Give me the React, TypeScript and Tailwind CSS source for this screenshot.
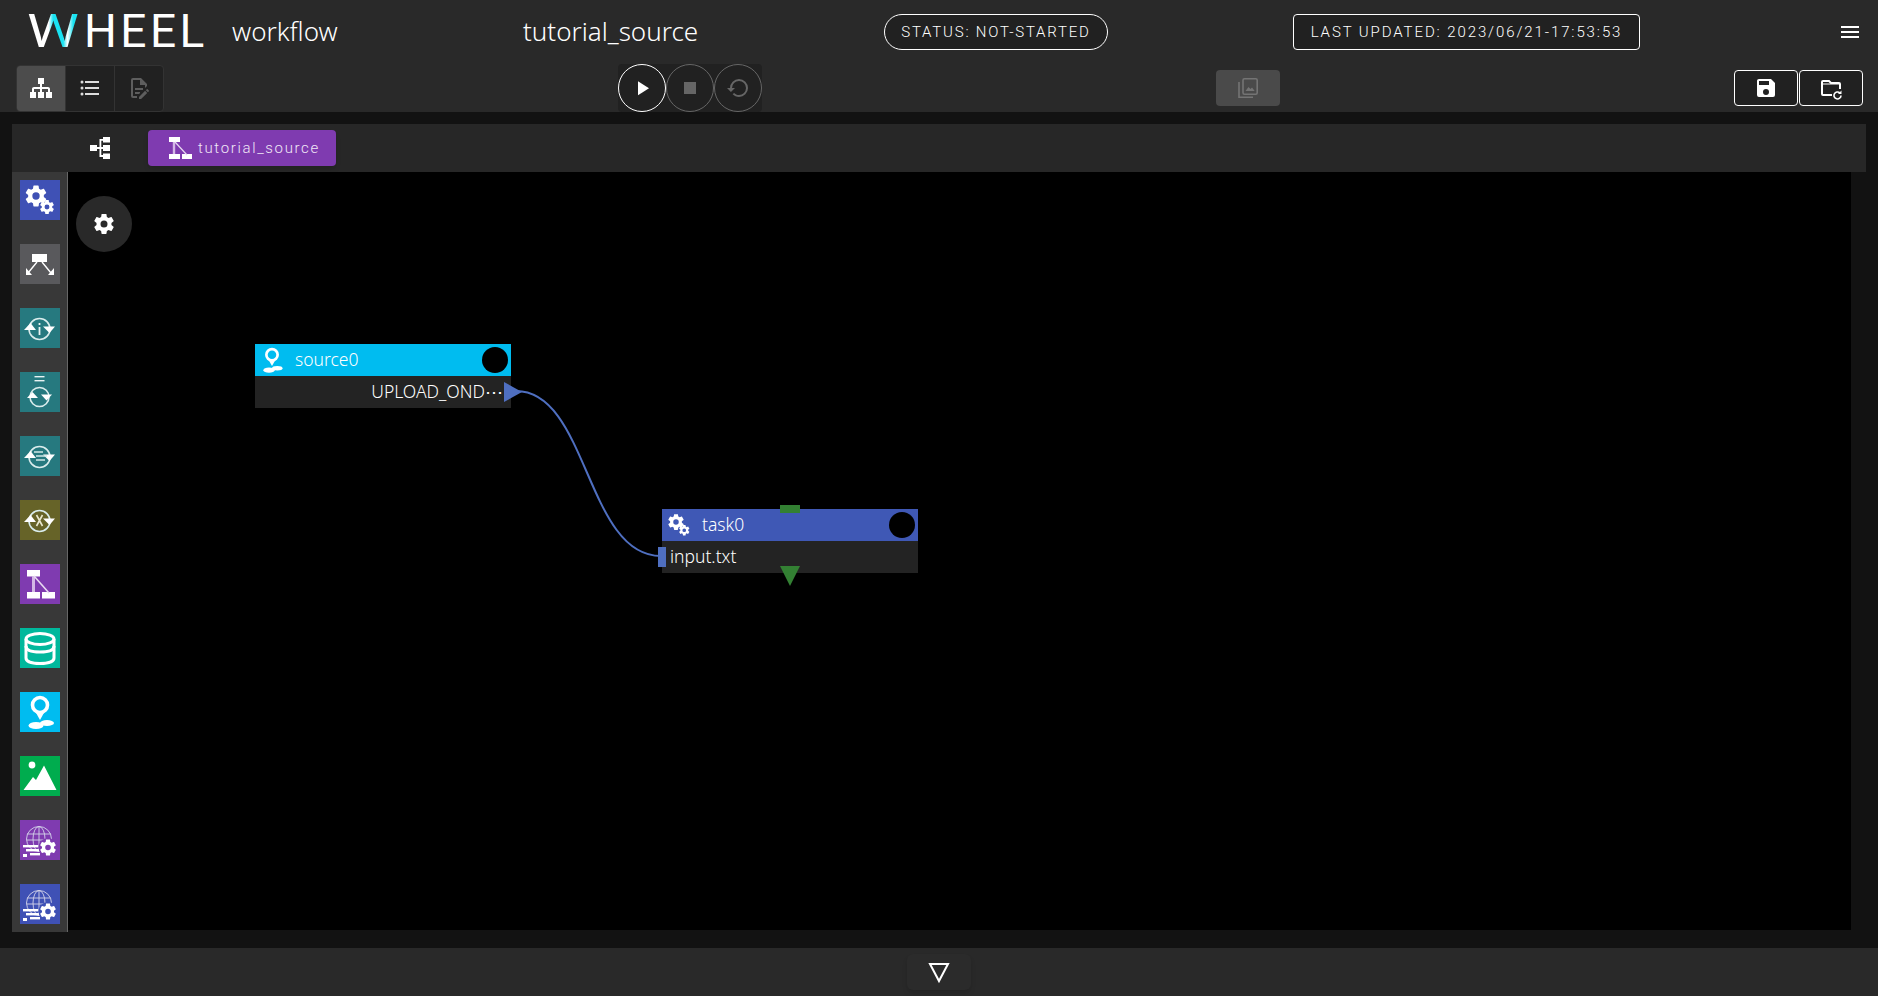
import type { ReactNode } from "react"

const COG =
  "M12,15.5A3.5,3.5 0 0,1 8.5,12A3.5,3.5 0 0,1 12,8.5A3.5,3.5 0 0,1 15.5,12A3.5,3.5 0 0,1 12,15.5M19.43,12.97C19.47,12.65 19.5,12.33 19.5,12C19.5,11.67 19.47,11.34 19.43,11L21.54,9.37C21.73,9.22 21.78,8.95 21.66,8.73L19.66,5.27C19.54,5.05 19.27,4.96 19.05,5.05L16.56,6.05C16.04,5.66 15.5,5.32 14.87,5.07L14.5,2.42C14.46,2.18 14.25,2 14,2H10C9.75,2 9.54,2.18 9.5,2.42L9.13,5.07C8.5,5.32 7.96,5.66 7.44,6.05L4.95,5.05C4.73,4.96 4.46,5.05 4.34,5.27L2.34,8.73C2.21,8.95 2.27,9.22 2.46,9.37L4.57,11C4.53,11.34 4.5,11.67 4.5,12C4.5,12.33 4.53,12.65 4.57,12.97L2.46,14.63C2.27,14.78 2.21,15.05 2.34,15.27L4.34,18.73C4.46,18.95 4.73,19.03 4.95,18.95L7.44,17.94C7.96,18.34 8.5,18.68 9.13,18.93L9.5,21.58C9.54,21.82 9.75,22 10,22H14C14.25,22 14.46,21.82 14.5,21.58L14.87,18.93C15.5,18.67 16.04,18.34 16.56,17.94L19.05,18.95C19.27,19.03 19.54,18.95 19.66,18.73L21.66,15.27C21.78,15.05 21.73,14.78 21.54,14.63L19.43,12.97Z"

function MdiIcon({ d, className }: { d: string; className?: string }) {
  return (
    <svg viewBox="0 0 24 24" fill="currentColor" className={className}>
      <path d={d} />
    </svg>
  )
}

// 40x40 artwork for the component library tiles
function GearsArt() {
  return (
    <g fill="#fff">
      <path d={COG} transform="translate(3.4 3.4) scale(1.05)" />
      <path d={COG} transform="translate(18.6 18.6) scale(0.7)" />
    </g>
  )
}

function LoopArt({ children }: { children?: ReactNode }) {
  return (
    <g>
      <circle cx="19.5" cy="21" r="10.5" fill="none" stroke="#d9ecec" strokeWidth="1.6" />
      <path d="M4 22 L16 22 L10.5 15 Z" fill="#fff" />
      <path d="M23 18.5 L35 18.5 L29.5 25 Z" fill="#fff" />
      {children}
    </g>
  )
}

function SourceArt() {
  return (
    <g fill="none">
      <circle cx="20" cy="13" r="7.5" stroke="#fff" strokeWidth="3.6" />
      <path d="M15 19 L20 28 L25 19 Z" fill="#fff" />
      <ellipse cx="16" cy="33.5" rx="7.5" ry="3.6" fill="#fff" />
      <ellipse cx="27" cy="31" rx="7" ry="3" fill="#fff" />
    </g>
  )
}

function WorkflowArt() {
  return (
    <g>
      <rect x="7" y="6" width="13" height="6.5" fill="#fff" />
      <rect x="7" y="28" width="13" height="6.5" fill="#fff" />
      <rect x="22" y="28" width="13" height="6.5" fill="#fff" />
      <path d="M13.5 12 V28" stroke="#d4b8e6" strokeWidth="3" />
      <path d="M14 12 L29 29" stroke="#e8daf1" strokeWidth="1.6" />
    </g>
  )
}

function GlobeArt() {
  return (
    <g>
      <g fill="none" stroke="#d5d5ea" strokeWidth="0.9">
        <circle cx="19" cy="19" r="12.5" />
        <ellipse cx="19" cy="19" rx="6" ry="12.5" />
        <path d="M19 6.5V31M7 14H31M6.5 20H32M8 26H28" />
      </g>
      <rect x="3" y="25" width="15" height="2.4" fill="#fff" />
      <rect x="6" y="29" width="13" height="2.4" fill="#fff" />
      <rect x="3" y="34" width="4" height="3" fill="#fff" />
      <rect x="10" y="33" width="10" height="2.4" fill="#fff" />
      <circle cx="28" cy="27.5" r="9.5" fill="currentColor" />
      <path d={COG} transform="translate(18.4 17.9) scale(0.8)" fill="#fff" />
    </g>
  )
}

const libraryItems: { bg: string; art: ReactNode }[] = [
  { bg: "bg-[#3f51b5]", art: <GearsArt /> },
  {
    bg: "bg-[#59595c]",
    art: (
      <g>
        <rect x="12" y="10" width="15" height="8" fill="#fff" />
        <path d="M17 18 L8 29 M22 18 L31 29" stroke="#fff" strokeWidth="1.4" />
        <path d="M6 31 L6 24 L12 31 Z M34 31 L34 24 L28 31 Z" fill="#fff" />
      </g>
    ),
  },
  {
    bg: "bg-[#26797f]",
    art: (
      <LoopArt>
        <rect x="18.6" y="15" width="1.8" height="2" fill="#e7f3f3" />
        <rect x="18.6" y="19" width="1.8" height="8" fill="#e7f3f3" />
      </LoopArt>
    ),
  },
  {
    bg: "bg-[#26797f]",
    art: (
      <g transform="translate(0 4)">
        <rect x="14.5" y="0" width="10" height="1.4" fill="#e7f3f3" />
        <rect x="14.5" y="4" width="10" height="1.4" fill="#e7f3f3" />
        <circle cx="19.5" cy="21" r="9.5" fill="none" stroke="#d9ecec" strokeWidth="1.6" />
        <path d="M7 22 L18 22 L12.5 16 Z" fill="#fff" />
        <path d="M21 18.5 L32 18.5 L26.5 24.5 Z" fill="#fff" />
      </g>
    ),
  },
  {
    bg: "bg-[#26797f]",
    art: (
      <LoopArt>
        <path d="M14 16H23M16 20H27M16 24H25" stroke="#cfe6e6" strokeWidth="1.4" />
      </LoopArt>
    ),
  },
  {
    bg: "bg-[#666328]",
    art: (
      <LoopArt>
        <path d="M16.5 15 L22.5 26 M22.5 15 L16.5 26" stroke="#e8e7cf" strokeWidth="1.6" />
      </LoopArt>
    ),
  },
  { bg: "bg-[#7f3bb0]", art: <WorkflowArt /> },
  {
    bg: "bg-[#00b89c]",
    art: (
      <g fill="none" stroke="#fff" strokeWidth="3">
        <ellipse cx="20" cy="11" rx="14" ry="5.5" />
        <path d="M6 11 V30 C6 33.5 12 35.5 20 35.5 C28 35.5 34 33.5 34 30 V11" />
        <path d="M6 18 C6 22 12 24 20 24 C28 24 34 22 34 18" />
      </g>
    ),
  },
  { bg: "bg-[#00bcf0]", art: <SourceArt /> },
  {
    bg: "bg-[#00ac4e]",
    art: (
      <g fill="#fff">
        <circle cx="12" cy="9" r="3.4" />
        <path d="M3.5 34 L13 21 L16 24 L24 9.5 L36.5 34 Z" />
      </g>
    ),
  },
  { bg: "bg-[#7f3bb0] text-[#7f3bb0]", art: <GlobeArt /> },
  { bg: "bg-[#3f51b5] text-[#3f51b5]", art: <GlobeArt /> },
]

export default function App() {
  return (
    <div className="h-screen flex flex-col overflow-hidden bg-[#121212] text-white font-['Roboto',sans-serif]">
      {/* Title row */}
      <header className="h-[64px] shrink-0 flex items-center bg-[#292929]">
        <div className="ml-[27px] w-[205px] pb-[2px] flex items-baseline text-[46px] leading-none font-normal">
          <span className="inline-block w-[57px] origin-left scale-x-[1.27] text-transparent bg-clip-text bg-[linear-gradient(90deg,#fff_0%,#fff_30%,#19e3f2_36%,#19e3f2_50%,#fff_56%,#19e3f2_64%,#19e3f2_100%)]">W</span>
          <span className="tracking-[3.5px]">HEEL</span>
        </div>
        <span className="text-[26px] font-light w-[291px] pb-[2px] font-['Noto_Sans',sans-serif]">workflow</span>
        <span className="text-[26px] font-light w-[361px] pb-[2px] font-['Noto_Sans',sans-serif]">tutorial_source</span>
        <div className="w-[224px] h-[36px] flex items-center justify-center rounded-full border border-white bg-[#212121] text-[15px] font-light tracking-[1.8px]">
          STATUS: NOT-STARTED
        </div>
        <div className="ml-[185px] w-[347px] h-[36px] flex items-center justify-center rounded border border-white bg-[#212121] text-[15px] font-light tracking-[1.9px]">
          LAST UPDATED: 2023/06/21-17:53:53
        </div>
        <MdiIcon d="M3,6H21V8H3V6M3,11H21V13H3V11M3,16H21V18H3V16Z" className="ml-[198px] w-[24px] h-[24px]" />
      </header>

      {/* Toolbar row */}
      <div className="h-[48px] shrink-0 flex items-center bg-[#292929]">
        <div className="ml-[16px] h-[47px] w-[148px] flex rounded border border-[#333] bg-[#212121] overflow-hidden">
          <div className="w-[49px] flex items-center justify-center bg-[#4c4c4c] border-r border-[#333]">
            <MdiIcon
              d="M9,2V8H11V11H5C3.89,11 3,11.89 3,13V16H1V22H7V16H5V13H11V16H9V22H15V16H13V13H19V16H17V22H23V16H21V13C21,11.89 20.11,11 19,11H13V8H15V2H9Z"
              className="w-[24px] h-[24px] text-white"
            />
          </div>
          <div className="w-[49px] flex items-center justify-center border-r border-[#333]">
            <MdiIcon
              d="M7,5H21V7H7V5M7,13V11H21V13H7M4,4.5A1.5,1.5 0 0,1 5.5,6A1.5,1.5 0 0,1 4,7.5A1.5,1.5 0 0,1 2.5,6A1.5,1.5 0 0,1 4,4.5M4,10.5A1.5,1.5 0 0,1 5.5,12A1.5,1.5 0 0,1 4,13.5A1.5,1.5 0 0,1 2.5,12A1.5,1.5 0 0,1 4,10.5M7,19V17H21V19H7M4,16.5A1.5,1.5 0 0,1 5.5,18A1.5,1.5 0 0,1 4,19.5A1.5,1.5 0 0,1 2.5,18A1.5,1.5 0 0,1 4,16.5Z"
              className="w-[24px] h-[24px] text-[#ddd]"
            />
          </div>
          <div className="flex-1 flex items-center justify-center">
            <MdiIcon
              d="M8,12H16V14H8V12M10,20H6V4H13V9H18V12.1L20,10.1V8L14,2H6A2,2 0 0,0 4,4V20A2,2 0 0,0 6,22H10V20M8,18H12.1L13,17.1V16H8V18M20.2,13C20.3,13 20.5,13.1 20.6,13.2L21.9,14.5C22.1,14.7 22.1,15.1 21.9,15.3L20.9,16.3L18.8,14.2L19.8,13.2C19.9,13.1 20,13 20.2,13M20.2,16.9L14.1,23H12V20.9L18.1,14.8L20.2,16.9Z"
              className="w-[24px] h-[24px] text-[#5e5e5e]"
            />
          </div>
        </div>

        <div className="ml-[454px] h-[48px] flex rounded bg-[#212121]">
          <div className="w-[48px] rounded-full border border-white flex items-center justify-center">
            <MdiIcon d="M8,5.14V19.14L19,12.14L8,5.14Z" className="w-[24px] h-[24px] text-white" />
          </div>
          <div className="w-[48px] rounded-full border border-[#666] flex items-center justify-center">
            <MdiIcon d="M18,18H6V6H18V18Z" className="w-[24px] h-[24px] text-[#666]" />
          </div>
          <div className="w-[48px] rounded-full border border-[#666] flex items-center justify-center">
            <MdiIcon
              d="M13,3A9,9 0 0,0 4,12H1L4.89,15.89L4.96,16.03L9,12H6A7,7 0 0,1 13,5A7,7 0 0,1 20,12A7,7 0 0,1 13,19C11.07,19 9.32,18.21 8.06,16.94L6.64,18.36C8.27,20 10.5,21 13,21A9,9 0 0,0 22,12A9,9 0 0,0 13,3Z"
              className="w-[24px] h-[24px] text-[#666]"
            />
          </div>
        </div>

        <div className="ml-[454px] w-[64px] h-[36px] flex items-center justify-center rounded bg-[#4a4a4a]">
          <svg viewBox="0 0 24 24" className="w-[24px] h-[24px] text-[#747474]" fill="none" stroke="currentColor" strokeWidth="1.6">
            <rect x="7" y="2.8" width="14.2" height="15.4" rx="1.5" />
            <path d="M3 6V21.2H17" />
            <path d="M9.5 15 L12.5 11 L14.5 13 L16 11.5 L18.7 15 Z" fill="currentColor" stroke="none" />
          </svg>
        </div>

        <div className="ml-[454px] flex gap-px">
          <div className="w-[64px] h-[36px] flex items-center justify-center rounded border border-white bg-[#212121]">
            <MdiIcon
              d="M15,9H5V5H15M12,19A3,3 0 0,1 9,16A3,3 0 0,1 12,13A3,3 0 0,1 15,16A3,3 0 0,1 12,19M17,3H5C3.89,3 3,3.9 3,5V19A2,2 0 0,0 5,21H19A2,2 0 0,0 21,19V7L17,3Z"
              className="w-[24px] h-[24px]"
            />
          </div>
          <div className="w-[64px] h-[36px] flex items-center justify-center rounded border border-white bg-[#212121]">
            <svg viewBox="0 0 24 24" className="w-[24px] h-[24px]" fill="none" stroke="#fff" strokeWidth="2">
              <path d="M13 19H4C3.4 19 3 18.6 3 18V6C3 5.4 3.4 5 4 5H10L12 7H20C20.6 7 21 7.4 21 8V13" />
              <path d="M3 8H21" strokeWidth="1" />
              <path d="M22 19.5A3.5 3.5 0 1 1 20.8 16.8" strokeWidth="1.6" />
              <path d="M22.5 14.5V18H19Z" fill="#fff" stroke="none" />
            </svg>
          </div>
        </div>
      </div>

      {/* Graph area */}
      <main className="flex-1 min-h-0 pt-[12px] px-[12px] flex flex-col">
        <div className="h-[48px] shrink-0 flex items-center bg-[#272727]">
          <svg viewBox="0 0 20 22" className="ml-[78px] w-[20px] h-[22px]" fill="#fff">
            <rect x="0" y="8" width="7" height="6" />
            <rect x="13" y="0" width="7" height="5.5" />
            <rect x="13" y="8" width="7" height="6" />
            <rect x="13" y="16.5" width="7" height="5.5" />
            <path d="M7 10H9.5V2H13V3.8H11.3V10H13V12H11.3V18H13V20H9.5V12H7Z" />
          </svg>
          <div className="ml-[38px] w-[188px] h-[36px] flex items-center rounded bg-[#7f3bb0] shadow-md">
            <svg viewBox="0 0 24 24" className="ml-[20px] w-[24px] h-[24px]">
              <rect x="1" y="1" width="11" height="5" fill="#fff" />
              <rect x="1" y="18" width="11" height="5" fill="#fff" />
              <rect x="14" y="18" width="10" height="5" fill="#fff" />
              <path d="M6 6V18" stroke="#d4b8e6" strokeWidth="2.4" />
              <path d="M7 6L19 19" stroke="#e8daf1" strokeWidth="1.2" />
            </svg>
            <span className="ml-[6px] text-[15px] font-light tracking-[1.65px] text-[#f0e6f6]">tutorial_source</span>
          </div>
        </div>

        <div className="h-[760px] shrink-0 flex">
          {/* Component library */}
          <aside className="w-[56px] shrink-0 flex flex-col items-center gap-[24px] pt-[8px] bg-[#383838] border-r border-[#666]">
            {libraryItems.map((item, i) => (
              <svg key={i} viewBox="0 0 40 40" className={`w-[40px] h-[40px] shrink-0 ${item.bg}`}>
                {item.art}
              </svg>
            ))}
          </aside>

          {/* Canvas: nodes sit at their own coordinates */}
          <div className="relative w-[1783px] h-[758px] bg-black">
            <div className="absolute left-[8px] top-[24px] w-[56px] h-[56px] rounded-full bg-[#292929] flex items-center justify-center">
              <MdiIcon d={COG} className="w-[24px] h-[24px] text-white" />
            </div>

            <svg className="absolute inset-0 w-full h-full">
              <path d="M448 219 C520 219, 518 384, 593 384" fill="none" stroke="#4f6fc0" strokeWidth="2" />
            </svg>

            {/* source0 */}
            <div className="absolute left-[187px] top-[172px] w-[256px] font-['Noto_Sans',sans-serif] text-[17.5px] font-light">
              <div className="relative h-[32px] bg-[#00bcf0] flex items-center">
                <svg viewBox="0 0 40 40" className="ml-[2px] w-[30px] h-[30px]">
                  <SourceArt />
                </svg>
                <span className="ml-[8px] pb-[2px]">source0</span>
                <span className="absolute right-[3px] top-[3px] w-[26px] h-[26px] rounded-full bg-black" />
              </div>
              <div className="relative h-[32px] bg-[#232323] flex items-center justify-end pr-[8px] pb-[2px]">
                UPLOAD_OND⋯
                <svg className="absolute left-[249px] top-[6px] w-[18px] h-[20px]" viewBox="0 0 18 20">
                  <path d="M0 0 L18 10 L0 20 Z" fill="#4f6fc0" />
                </svg>
              </div>
            </div>

            {/* task0 */}
            <div className="absolute left-[594px] top-[337px] w-[256px] font-['Noto_Sans',sans-serif] text-[17.5px] font-light">
              <div className="relative h-[32px] bg-[#3f58b5] flex items-center">
                <svg viewBox="0 0 40 40" className="ml-[2px] w-[30px] h-[30px]">
                  <GearsArt />
                </svg>
                <span className="ml-[8px] pb-[2px]">task0</span>
                <span className="absolute right-[3px] top-[3px] w-[26px] h-[26px] rounded-full bg-black" />
                <span className="absolute left-[118px] top-[-4px] w-[20px] h-[8px] bg-[#338033]" />
              </div>
              <div className="relative h-[32px] bg-[#232323] flex items-center pl-[8px] pb-[2px]">
                input.txt
                <span className="absolute left-[-4px] top-[6px] w-[8px] h-[20px] bg-[#4f6fc0]" />
                <svg className="absolute left-[118px] top-[25px] w-[20px] h-[20px]" viewBox="0 0 20 20">
                  <path d="M0 0 L20 0 L10 20 Z" fill="#338033" />
                </svg>
              </div>
            </div>
          </div>
        </div>
      </main>

      {/* Footer */}
      <footer className="h-[48px] shrink-0 flex justify-center items-center bg-[#292929]">
        <div className="w-[64px] h-[36px] flex items-center justify-center rounded-md bg-[#2b2b2b] shadow-md">
          <svg viewBox="0 0 24 24" className="w-[24px] h-[24px]" fill="none" stroke="#fff" strokeWidth="2">
            <path d="M3 4H21L12 21Z" />
          </svg>
        </div>
      </footer>
    </div>
  )
}
